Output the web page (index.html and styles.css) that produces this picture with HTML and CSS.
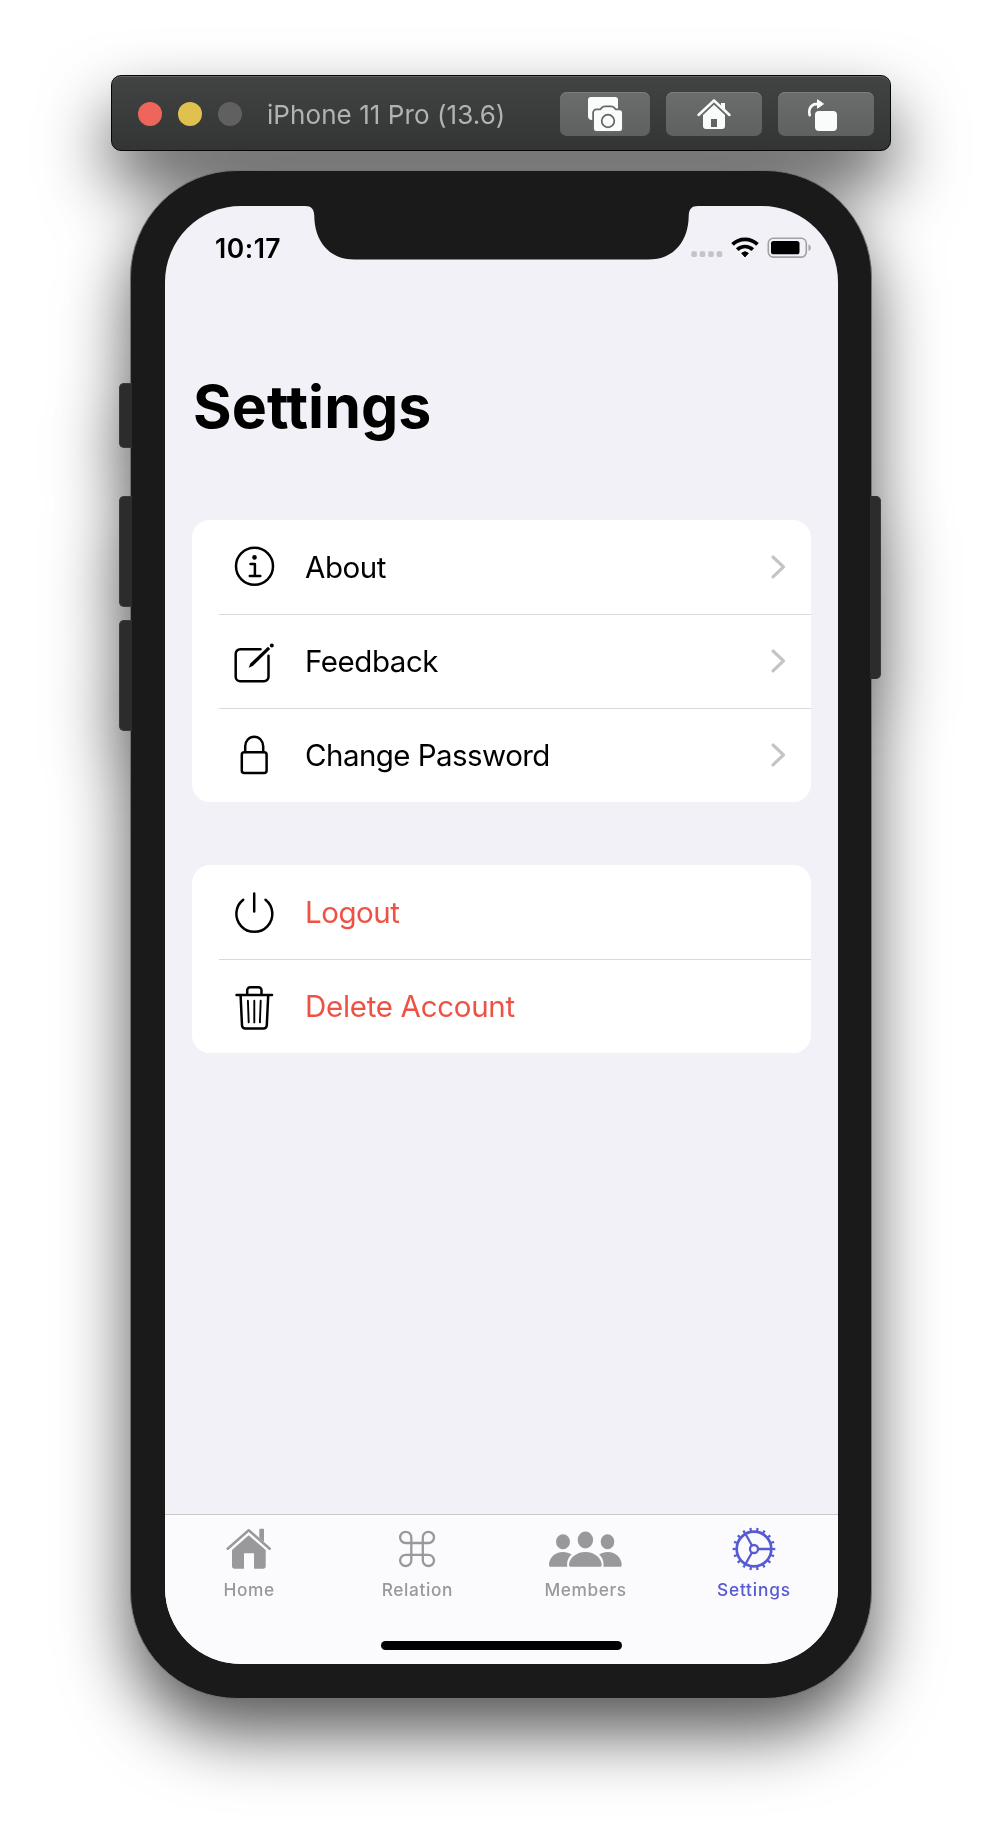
FILE: index.html
```html
<!DOCTYPE html>
<html lang="en">
<head>
<meta charset="utf-8">
<title>Settings</title>
<link rel="stylesheet" href="styles.css">
</head>
<body>
<main class="simulator">
  <header class="toolbar">
    <span class="light light-close"></span>
    <span class="light light-min"></span>
    <span class="light light-max"></span>
    <span class="device-name">iPhone 11 Pro (13.6)</span>
    <div class="tools">
      <button class="tool tool-camera" aria-label="Screenshot">
        <svg width="90" height="44" viewBox="0 0 90 44">
          <path d="M31 5h24a3 3 0 0 1 3 3v20H32a4 4 0 0 1-4-4V8a3 3 0 0 1 3-3z" fill="#fafcfb"/>
          <path d="M36.500 18.300h4.200l1.800-2.100a3 3 0 0 1 2.200-1h6.600a3 3 0 0 1 2.200 1l1.800 2.100h4.200a2.500 2.500 0 0 1 2.500 2.500v15.700a2.500 2.500 0 0 1-2.500 2.500h-23a2.500 2.500 0 0 1-2.500-2.500v-15.700a2.500 2.500 0 0 1 2.500-2.500z" fill="#fafcfb" stroke="#676968" stroke-width="3.600" paint-order="stroke"/>
          <circle cx="48" cy="29" r="6.300" fill="none" stroke="#636564" stroke-width="1.700"/>
        </svg>
      </button>
      <button class="tool" aria-label="Home">
        <svg width="96" height="44" viewBox="0 0 96 44">
          <path d="M32.500 23 48 8.500 63.500 23" fill="none" stroke="#fafcfb" stroke-width="2.500" stroke-linecap="round" stroke-linejoin="round"/>
          <path d="M55 11h4v8l-4-4z" fill="#fafcfb"/>
          <path d="M48 12.700 59 23v11a3 3 0 0 1-3 3H40a3 3 0 0 1-3-3V23zM45 27v8h6v-8z" fill="#fafcfb" fill-rule="evenodd"/>
        </svg>
      </button>
      <button class="tool" aria-label="Rotate">
        <svg width="96" height="44" viewBox="0 0 96 44">
          <rect x="37" y="19" width="22" height="20" rx="4" fill="#fafcfb"/>
          <path d="M31.700 23.200C30 16 33.500 11.900 40 11.900" fill="none" stroke="#fafcfb" stroke-width="2.600" stroke-linecap="round"/>
          <path d="M39.500 7.700 45.500 11.900 39.500 16.200z" fill="#fafcfb" stroke="#fafcfb" stroke-width="1" stroke-linejoin="round"/>
        </svg>
      </button>
    </div>
  </header>

  <section class="phone">
    <i class="key key-mute"></i>
    <i class="key key-up"></i>
    <i class="key key-down"></i>
    <i class="key key-power"></i>
    <div class="screen">
      <svg class="notch" width="394" height="54" viewBox="0 0 394 54">
        <path d="M0 0C6.500 0 9 3 9.300 10C9.500 34 23 53.600 50 53.600H343C370 53.600 383.500 34 383.700 10C384 3 386.500 0 393 0z" fill="#1a1a1a"/>
      </svg>
      <div class="status">
        <span class="time">10:17</span>
        <svg class="indicators" width="124" height="24" viewBox="0 0 124 24">
          <g fill="#c4c4c8"><rect x="2.300" y="15.300" width="5.600" height="5.600" rx="1.600"/><rect x="10.700" y="15.300" width="5.600" height="5.600" rx="1.600"/><rect x="19.200" y="15.300" width="5.600" height="5.600" rx="1.600"/><rect x="27.600" y="15.300" width="5.600" height="5.600" rx="1.600"/></g>
          <g fill="none" stroke="#000" stroke-width="3.700"><path d="M43.500 8.400a18 18 0 0 1 25 0"/><path d="M48.200 13.600a11.300 11.300 0 0 1 15.600 0"/></g>
          <path d="M52.700 17.200a5 5 0 0 1 6.600 0L56 20.900z" stroke="#000" stroke-width="1" stroke-linejoin="round"/>
          <rect x="79.300" y="2.300" width="38" height="18.800" rx="5" fill="none" stroke="#a2a2a5" stroke-width="1.600"/>
          <rect x="82" y="5" width="28.500" height="13.300" rx="2.600"/>
          <path d="M119.500 8.500c3 1.200 3 5.300 0 6.500z" fill="#a2a2a5"/>
        </svg>
      </div>

      <div class="content">
        <h1 class="title">Settings</h1>

        <ul class="group">
          <li class="row">
            <svg class="icon" viewBox="0 0 44 48"><circle cx="22.500" cy="23.300" r="18.500"/><circle class="solid" cx="22.500" cy="14.400" r="2.300"/><path d="M18.500 21h4.400v12M17.800 33h10.500"/></svg>
            <span class="label label-about">About</span>
            <svg class="chevron" viewBox="0 0 16 26"><path d="M3 3l10.500 9.900L3 22.800"/></svg>
          </li>
          <li class="row">
            <svg class="icon" viewBox="0 0 44 48"><path d="M28.500 12.300H8.200a4.500 4.500 0 0 0-4.500 4.500v23a4.500 4.500 0 0 0 4.500 4.500h23.800a4.500 4.500 0 0 0 4.500-4.500V18.700"/><path class="solid" d="M16.700 30.700l1.600-4.200L36 9.800l2.200 2.300L20.700 29z"/><circle class="solid" cx="39.800" cy="8.400" r="2"/></svg>
            <span class="label label-feedback">Feedback</span>
            <svg class="chevron" viewBox="0 0 16 26"><path d="M3 3l10.500 9.900L3 22.800"/></svg>
          </li>
          <li class="row">
            <svg class="icon" viewBox="0 0 44 48"><rect x="9.800" y="21.200" width="24.800" height="20.700" rx="2.500"/><path d="M13.200 21v-5.700a9 9.600 0 0 1 18 0V21"/></svg>
            <span class="label label-password">Change Password</span>
            <svg class="chevron" viewBox="0 0 16 26"><path d="M3 3l10.500 9.900L3 22.800"/></svg>
          </li>
        </ul>

        <ul class="group">
          <li class="row">
            <svg class="icon" viewBox="0 0 44 48"><path d="M11.200 11.700a18 18 0 1 0 22.300 0M22.200 5.500V23.500"/></svg>
            <span class="label label-logout">Logout</span>
          </li>
          <li class="row">
            <svg class="icon" viewBox="0 0 44 48"><path d="M4.500 12.900h35.500M15.200 12.500V8.200a3 3 0 0 1 3-3h8.300a3 3 0 0 1 3 3v4.300M8.600 13.500l1.400 29.800a3.200 3.200 0 0 0 3.200 3.200h18.400a3.200 3.200 0 0 0 3.200-3.200l1.400-29.800"/><path class="thin" d="M15.900 18.700l.8 21.700M22.300 18.700v21.700M28.700 18.700l-.8 21.700"/></svg>
            <span class="label label-delete">Delete Account</span>
          </li>
        </ul>
      </div>

      <nav class="tabs">
        <a class="tab">
          <svg width="46" height="44" viewBox="0 0 46 44"><path d="M1.700 21.700 22.700 3.200 43.700 21.700" fill="none" stroke="currentColor" stroke-width="2.500" stroke-linecap="round" stroke-linejoin="round"/><path d="M33.300 2.500a.8.800 0 0 1 .8-.8h3.100a.8.800 0 0 1 .8.800V15l-4.700-4.200z" fill="currentColor"/><path d="M22.700 8.200 39.700 23v16a2.700 2.700 0 0 1-2.700 2.700h-9V26.300H18v15.400H8.700A2.700 2.700 0 0 1 6 39V23z" fill="currentColor"/></svg>
          <span class="tab-label">Home</span>
        </a>
        <a class="tab">
          <svg width="38" height="44" viewBox="0 -3 38 44"><path d="M13.300 13V7.600A5.600 5.600 0 1 0 7.700 13h22.700A5.600 5.600 0 1 0 24.800 7.600v22.800a5.600 5.600 0 1 0 5.600-5.600H7.700a5.600 5.600 0 1 0 5.600 5.600z" fill="none" stroke="currentColor" stroke-width="2.300"/></svg>
          <span class="tab-label">Relation</span>
        </a>
        <a class="tab">
          <svg width="73" height="44" viewBox="0 -4 73 44" fill="currentColor"><ellipse cx="14" cy="10.700" rx="7" ry="7.500"/><ellipse cx="36.400" cy="9" rx="7.700" ry="8.500"/><ellipse cx="58.500" cy="10.700" rx="6.800" ry="7.500"/><path d="M2 35.700c-1.300 0-2-.6-2-1.800C0 27 6 21 14 21c3.300 0 6.200.9 8.600 2.500C19.600 26.300 17.500 30 18.300 35.700z"/><path d="M70.700 35.700c1.300 0 2-.6 2-1.800C72.700 27 66.700 21 58.700 21c-3.300 0-6.200.9-8.600 2.500C53.100 26.300 55.200 30 54.400 35.700z"/><path d="M22.300 35.700c-1.500 0-2.300-.6-2.300-1.800C20 27.500 27 21 36.400 21s16.300 6.500 16.300 12.900c0 1.200-.8 1.800-2.300 1.800z"/></svg>
          <span class="tab-label">Members</span>
        </a>
        <a class="tab tab-active">
          <svg width="44" height="44" viewBox="0 0 44 44" fill="none" stroke="currentColor"><circle cx="22" cy="22" r="17.300" stroke-width="2.700"/><circle cx="22" cy="22" r="19.700" stroke-width="3.200" pathLength="180" stroke-dasharray="3.200 6.800" stroke-dashoffset="1.600"/><circle cx="22" cy="22" r="4" stroke-width="2.300"/><path d="M26 22h13M20 18.500 13.500 7M20 25.500 13.500 37" stroke-width="2.300"/></svg>
          <span class="tab-label">Settings</span>
        </a>
        <i class="home-bar"></i>
      </nav>
    </div>
  </section>
</main>
</body>
</html>
```
FILE: styles.css
```css
* { box-sizing: border-box; }
body {
  margin: 0;
  width: 1002px;
  height: 1848px;
  padding: 75px 111px 0;
  overflow: hidden;
  background: #fff;
  font-family: Inter, "Liberation Sans", sans-serif;
}
.simulator {
  width: 780px;
  filter: drop-shadow(0 34px 34px rgba(0, 0, 0, .66));
}

/* Window toolbar */
.toolbar {
  display: flex;
  align-items: center;
  height: 76px;
  padding: 2px 16px 0 26px;
  border: 1px solid #060606;
  border-radius: 10px;
  background: linear-gradient(#424443, #333534);
  box-shadow: inset 0 1px 0 #626463;
}
.light {
  width: 24px;
  height: 24px;
  margin-right: 16px;
  border-radius: 50%;
}
.light-close { background: #ee665b; }
.light-min { background: #e1c14d; }
.light-max { background: #5f605f; }
.device-name {
  margin-left: 9px;
  color: #b1b2b1;
  font-size: 26px;
  letter-spacing: .07px;
  white-space: nowrap;
}
.tools {
  display: flex;
  gap: 16px;
  margin-left: auto;
}
.tool {
  width: 96px;
  height: 44px;
  padding: 0;
  border: 0;
  border-radius: 7px;
  background: linear-gradient(#6b6d6c, #5f6160);
  box-shadow: inset 0 1px 0 #7b7d7c;
}
.tool-camera { width: 90px; }
.tool svg { display: block; }

/* Device body */
.phone {
  position: relative;
  width: 742px;
  height: 1529px;
  margin: 19px 0 0 19px;
  padding: 35px 33px 34px 34px;
  border: 1px solid #747474;
  border-radius: 107px;
  background: #1a1a1a;
}
.key {
  position: absolute;
  left: -12px;
  width: 13px;
  height: 111px;
  border: 1px solid #3a3a3a;
  border-right: 0;
  border-radius: 5px 0 0 5px;
  background: #2c2c2c;
}
.key-mute { top: 212px; height: 65px; }
.key-up { top: 325px; }
.key-down { top: 449px; }
.key-power {
  top: 325px;
  left: 739px;
  width: 11px;
  height: 183px;
  border: 0;
  border-right: 1px solid #3a3a3a;
  border-radius: 0 5px 5px 0;
}
.screen {
  position: relative;
  display: flex;
  flex-direction: column;
  width: 673px;
  height: 1458px;
  overflow: hidden;
  border-radius: 76px;
  background: #f2f1f7;
}
.notch {
  position: absolute;
  top: -.5px;
  left: 140px;
}
.status {
  display: flex;
  justify-content: space-between;
  height: 61px;
  padding: 22px 25px 0 50px;
}
.time {
  font-size: 26.500px;
  font-weight: 600;
  line-height: 40px;
  letter-spacing: .5px;
}
.indicators { margin-top: 8px; }

/* Settings list */
.content {
  flex: 1;
  padding: 104px 27px 0;
}
.title {
  margin: 0 0 77px 1px;
  font-size: 59px;
  font-weight: 700;
  line-height: 72px;
  letter-spacing: .05px;
}
.group {
  margin: 0 0 63px;
  padding: 0;
  list-style: none;
  border-radius: 18px;
  background: #fff;
}
.row {
  position: relative;
  display: flex;
  align-items: center;
  height: 94px;
  padding: 0 25.500px 0 40px;
}
.row + .row {
  background: linear-gradient(#d9d9db, #d9d9db) 27px 0 / 100% 1px no-repeat;
}
.icon {
  width: 44px;
  height: 48px;
  fill: none;
  stroke: #000;
  stroke-width: 2.500;
  stroke-linecap: round;
  stroke-linejoin: round;
}
.icon .solid { fill: #000; stroke: none; }
.icon .thin { stroke-width: 1.900; }
.label {
  flex: 1;
  margin-left: 29px;
  font-size: 29.500px;
  line-height: 40px;
  letter-spacing: -.45px;
}
.label-password { letter-spacing: -.55px; }
.label-logout, .label-delete { color: #ee5244; }
.label-delete { letter-spacing: -.3px; }
.chevron {
  width: 16px;
  height: 26px;
  fill: none;
  stroke: #c4c4c7;
  stroke-width: 3.200;
  stroke-linecap: round;
  stroke-linejoin: round;
}

/* Tab bar */
.tabs {
  position: relative;
  display: flex;
  height: 150px;
  padding-top: 12px;
  border-top: 1px solid #c9c8ce;
  background: #fbfbfd;
}
.tab {
  flex: 1;
  display: flex;
  flex-direction: column;
  align-items: center;
  gap: 9px;
  color: #99999b;
}
.tab-active { color: #565ad3; }
.tab-label {
  font-size: 17.300px;
  font-weight: 500;
  line-height: 20px;
  letter-spacing: .6px;
}
.tab-active .tab-label { letter-spacing: .8px; }
.home-bar {
  position: absolute;
  bottom: 14px;
  left: 216px;
  width: 241px;
  height: 9px;
  border-radius: 5px;
  background: #000;
}
```
